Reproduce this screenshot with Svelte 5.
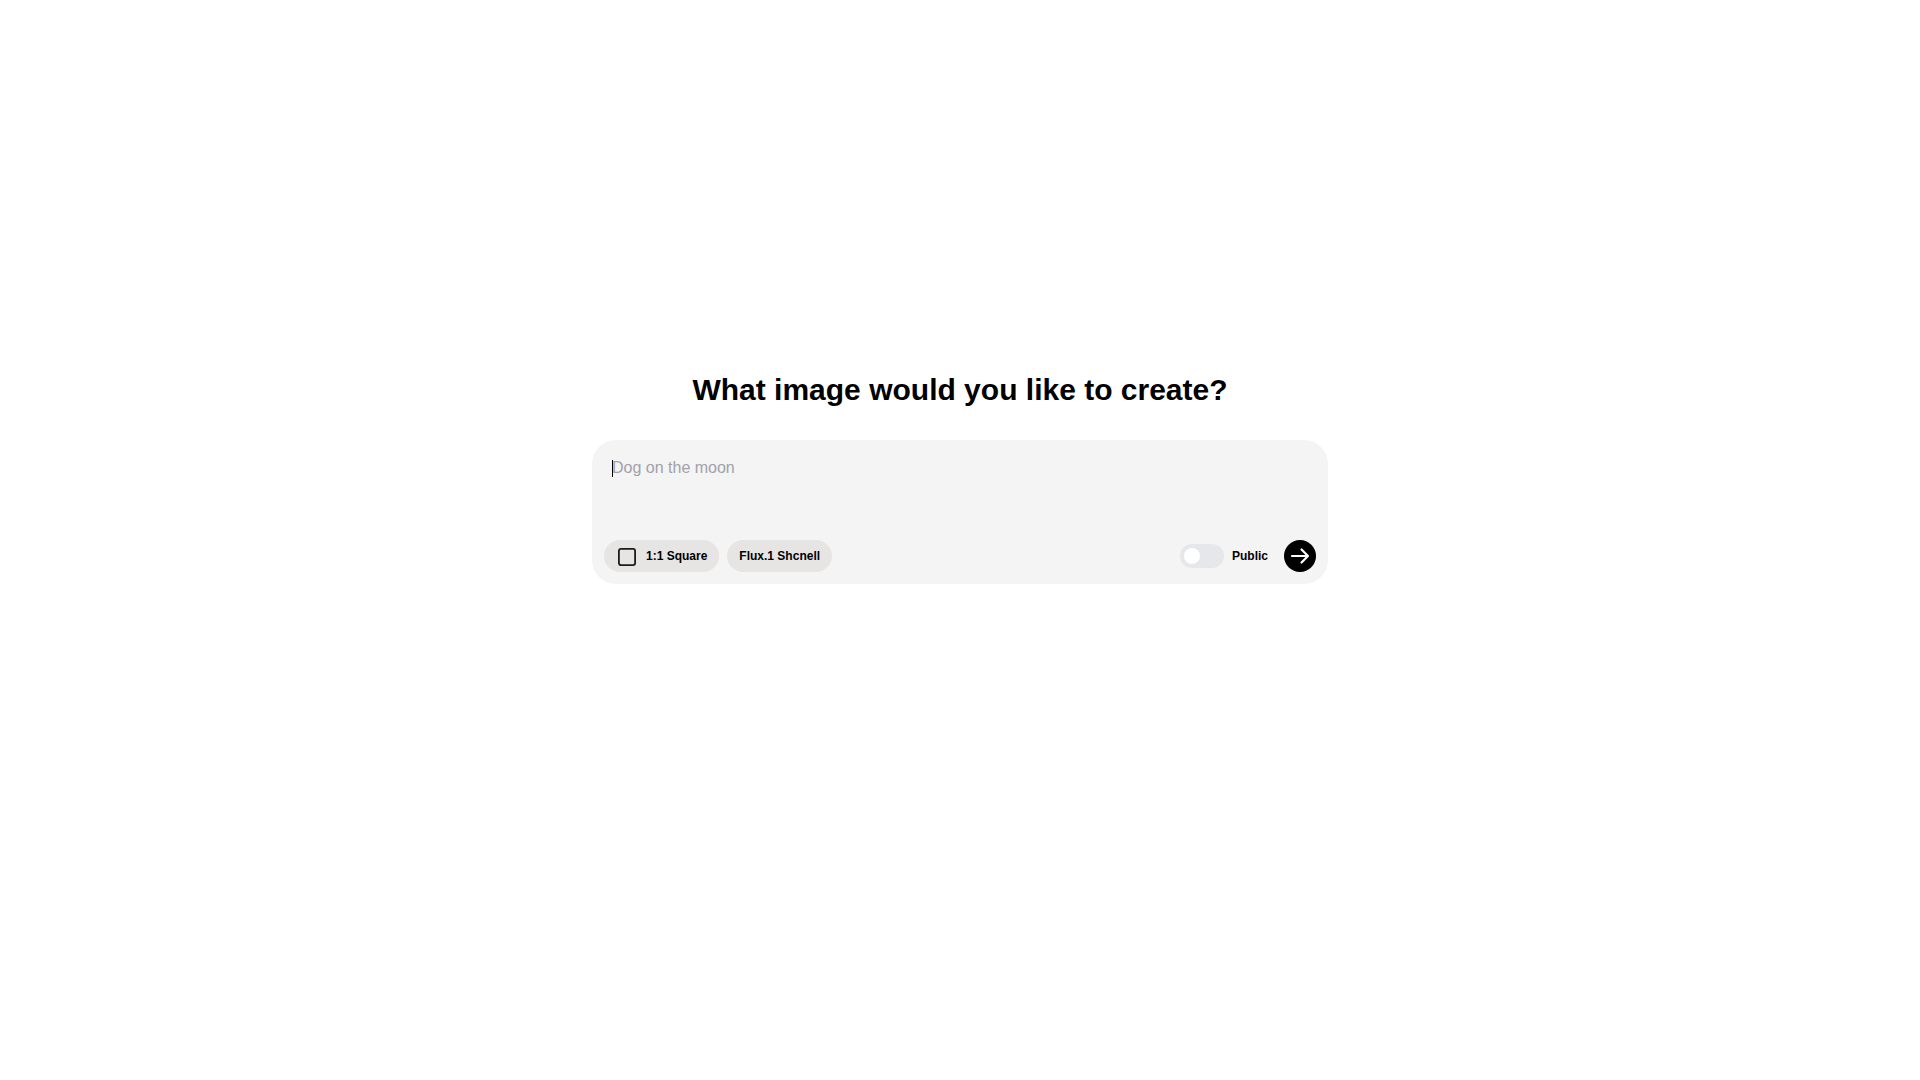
<script lang="ts">
  import { onMount } from 'svelte';

  let prompt = $state('');
  let isPublic = $state(false);
  let field: HTMLTextAreaElement;

  onMount(() => field.focus());
</script>

<svelte:head>
  <title>Create an image</title>
</svelte:head>

<main>
  <h1>What image would you like to create?</h1>

  <form class="prompt-box" onsubmit={(e) => e.preventDefault()}>
    <div class="field">
      <textarea
        bind:this={field}
        bind:value={prompt}
        rows="3"
        aria-label="Prompt"
        placeholder="Dog on the moon"
      ></textarea>
      {#if !prompt}
        <span class="caret"></span>
      {/if}
    </div>

    <div class="toolbar">
      <div class="options">
        <button type="button" class="pill">
          <svg width="22" height="24" viewBox="0 0 22 24" fill="none" aria-hidden="true">
            <rect x="2.9" y="4.9" width="16.2" height="16.2" rx="2" stroke="#1c1c1c" stroke-width="1.8" />
          </svg>
          1:1 Square
        </button>
        <button type="button" class="pill">Flux.1 Shcnell</button>
      </div>

      <div class="actions">
        <label class="visibility">
          <input type="checkbox" role="switch" bind:checked={isPublic} />
          Public
        </label>
        <button type="submit" class="submit" aria-label="Create">
          <svg width="24" height="24" viewBox="0 0 24 24" fill="none" aria-hidden="true">
            <path
              d="M4 12h16M13.5 5.5L20 12l-6.5 6.5"
              stroke="#fff"
              stroke-width="2.2"
              stroke-linecap="round"
              stroke-linejoin="round"
            />
          </svg>
        </button>
      </div>
    </div>
  </form>
</main>

<style>
  :global(*, *::before, *::after) {
    box-sizing: border-box;
  }

  :global(body) {
    background: #fff;
    color: #000;
    font-family: 'Liberation Sans', Arial, sans-serif;
  }

  main {
    min-height: 100vh;
    max-width: 768px;
    margin: 0 auto;
    padding: 0 16px 124px;
    display: flex;
    flex-direction: column;
    justify-content: center;
    gap: 32px;
  }

  h1 {
    margin: 0;
    font-size: 30px;
    line-height: 36px;
    font-weight: 700;
    text-align: center;
  }

  .prompt-box {
    padding: 12px;
    background: #f4f4f4;
    border-radius: 24px;
  }

  .field {
    position: relative;
    margin-bottom: 8px;
  }

  textarea {
    display: block;
    width: 100%;
    height: 80px;
    padding: 4px 8px;
    border: none;
    outline: none;
    resize: none;
    background: transparent;
    color: #000;
    font-family: inherit;
    font-size: 16px;
    line-height: 24px;
    caret-color: transparent;
  }

  textarea::placeholder {
    color: #a1a1aa;
  }

  .caret {
    position: absolute;
    top: 8px;
    left: 8px;
    width: 1px;
    height: 17px;
    background: #000;
  }

  .toolbar,
  .options,
  .actions,
  .visibility,
  .pill {
    display: flex;
    align-items: center;
  }

  .toolbar {
    justify-content: space-between;
  }

  .options,
  .visibility,
  .pill {
    gap: 8px;
  }

  .actions {
    gap: 16px;
  }

  .pill,
  .visibility {
    font-family: inherit;
    font-size: 12px;
    line-height: 16px;
    font-weight: 700;
    color: #000;
  }

  .pill {
    height: 32px;
    padding: 0 12px;
    border: none;
    border-radius: 16px;
    background: #e6e5e3;
    cursor: pointer;
  }

  .visibility input {
    appearance: none;
    width: 44px;
    height: 24px;
    margin: 0;
    padding: 4px;
    border-radius: 12px;
    background: #e5e7eb;
    cursor: pointer;
  }

  .visibility input::before {
    content: '';
    display: block;
    width: 16px;
    height: 16px;
    border-radius: 50%;
    background: #fff;
    transition: transform 0.2s;
  }

  .visibility input:checked {
    background: #000;
  }

  .visibility input:checked::before {
    transform: translateX(20px);
  }

  .submit {
    display: flex;
    align-items: center;
    justify-content: center;
    width: 32px;
    height: 32px;
    padding: 0;
    border: none;
    border-radius: 50%;
    background: #000;
    cursor: pointer;
  }
</style>
